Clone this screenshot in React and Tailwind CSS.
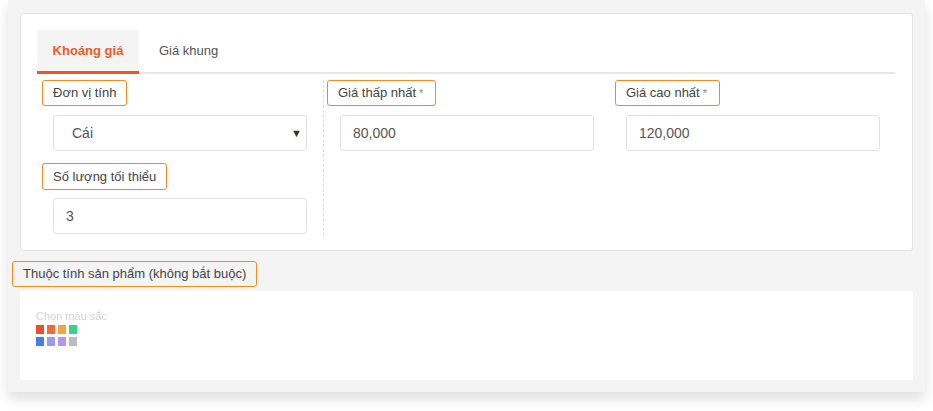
import React from "react";

const font = { fontFamily: '"Liberation Sans", Arial, sans-serif' };

function LabelBox({ children, className = "" }) {
  return (
    <div
      className={
        "inline-flex h-[26px] items-center rounded-[3px] border border-[#f08a24] px-[10px] text-[13px] text-[#444] " +
        className
      }
    >
      {children}
    </div>
  );
}

function Field({ value, select = false, className = "" }) {
  return (
    <div
      className={
        "flex h-[36px] w-[254px] items-center justify-between rounded-[3px] border border-[#e3e3e3] bg-white text-[14px] text-[#555] " +
        className
      }
    >
      <span className={select ? "pl-[18px]" : "pl-[12px]"}>{value}</span>
      {select && <span className="pr-[4px] text-[11px] text-[#333]">▼</span>}
    </div>
  );
}

export default function App() {
  const colors1 = ["#f04b36", "#f26a38", "#f6a43f", "#3ecf8a"];
  const colors2 = ["#4a7fe0", "#9c98f5", "#b396f1", "#bcbcbc"];
  return (
    <div className="h-[411px] w-[933px] overflow-hidden bg-white" style={font}>
      <div className="ml-[8px] flex h-[392px] w-[917px] flex-col bg-[#f4f4f4] px-[12px] pt-[13px] shadow-[0_7px_12px_rgba(0,0,0,0.13)]">
        <div className="h-[238px] w-[893px] rounded-[3px] border border-[#e4e4e4] bg-white pl-[16px] pt-[16px]">
          <div className="flex h-[44px] w-[858px] border-b-2 border-[#e8e8e8]">
            <div className="mb-[-2px] flex h-[44px] w-[102px] items-center justify-center border-b-[3px] border-[#ee5622] bg-[#f4f4f4] text-[13px] font-bold text-[#ee5a2a]">
              Khoáng giá
            </div>
            <div className="flex items-center pl-[20px] text-[13px] text-[#555]">
              Giá khung
            </div>
          </div>
          <div className="mt-[6px] flex">
            <div className="flex w-[286px] flex-col items-start">
              <LabelBox className="ml-[5px]">Đơn vị tính</LabelBox>
              <Field value="Cái" select className="ml-[16px] mt-[9px]" />
              <LabelBox className="ml-[5px] mt-[12px] h-[27px]">Số lượng tối thiểu</LabelBox>
              <Field value="3" className="ml-[16px] mt-[8px]" />
            </div>
            <div className="flex h-[156px] w-[287px] flex-col items-start border-l border-dashed border-[#dcdcdc]">
              <LabelBox className="ml-[3px] pr-[12px]">
                Giá thấp nhất <span className="ml-[3px] text-[11px] text-[#888]">*</span>
              </LabelBox>
              <Field value="80,000" className="ml-[16px] mt-[9px]" />
            </div>
            <div className="flex flex-col items-start">
              <LabelBox className="ml-[5px] pr-[12px]">
                Giá cao nhất <span className="ml-[3px] text-[11px] text-[#888]">*</span>
              </LabelBox>
              <Field value="120,000" className="ml-[16px] mt-[9px]" />
            </div>
          </div>
        </div>
        <LabelBox className="ml-[-8px] mt-[10px] self-start px-[9px]">
          Thuộc tính sản phẩm (không bắt buộc)
        </LabelBox>
        <div className="mt-[4px] h-[89px] w-[893px] rounded-[2px] bg-white pl-[16px] pt-[18px]">
          <div className="text-[11px] leading-[14px] text-[#d2d2d2] blur-[0.5px]">Chọn màu sắc</div>
          <div className="mt-[2px] flex flex-col gap-[3px]">
            <div className="flex gap-[3px]">
              {colors1.map((c) => (
                <div key={c} className="h-[9px] w-[8px]" style={{ backgroundColor: c }} />
              ))}
            </div>
            <div className="flex gap-[3px]">
              {colors2.map((c) => (
                <div key={c} className="h-[9px] w-[8px]" style={{ backgroundColor: c }} />
              ))}
            </div>
          </div>
        </div>
      </div>
    </div>
  );
}
